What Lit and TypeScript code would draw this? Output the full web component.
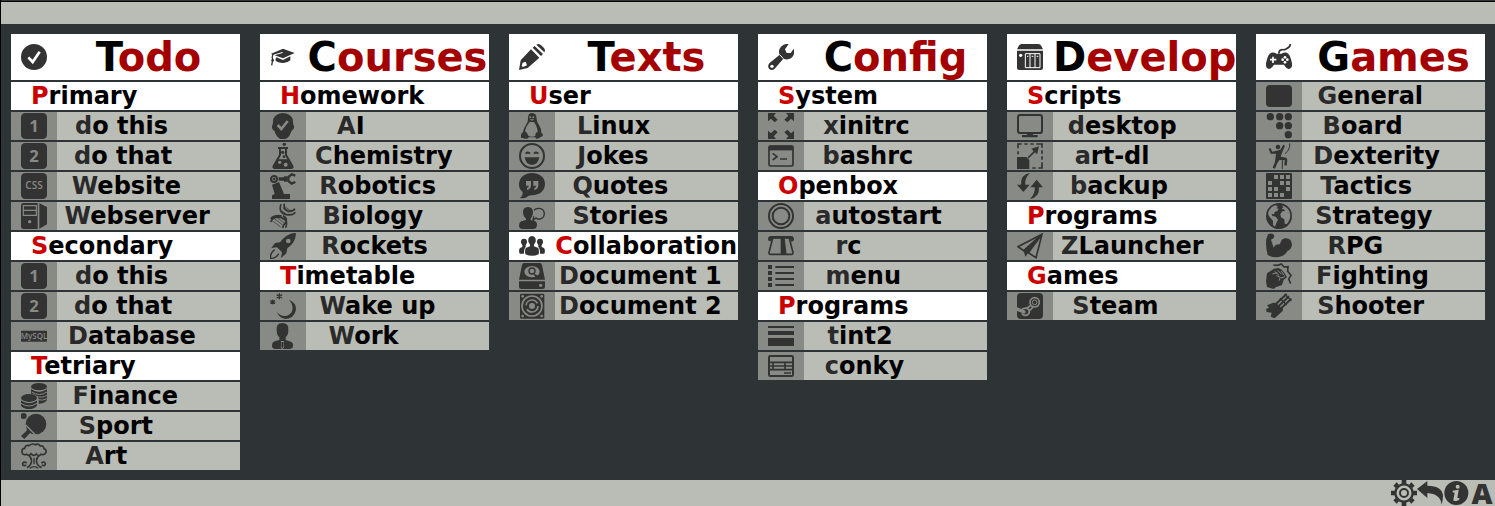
import { LitElement, html, svg, css, SVGTemplateResult } from "lit";
import { customElement, property } from "lit/decorators.js";

// Every glyph lives on a 78 x 78 grid. Class names: f = fill, s = stroke,
// c = cut-out fill in the cell colour, l = cut-out line in the cell colour.
const tile = (label: string, size: number, y: number) => svg`
  <rect class="f" width="78" height="78" rx="13" />
  <text class="c" x="39" y=${y} font-size=${size} text-anchor="middle">${label}</text>`;

const ICONS: Record<string, SVGTemplateResult> = {
  check: svg`<circle class="f" cx="39" cy="39" r="39" /><path class="l" stroke-width="8" d="M22 40L35 54L56 23" />`,
  one: tile("1", 50, 58),
  two: tile("2", 50, 58),
  css: svg`<rect class="f" width="78" height="78" rx="13" /><text class="c thin" x="39" y="49" font-size="30" text-anchor="middle">CSS</text>`,
  mysql: svg`<rect class="f" y="23" width="78" height="33" rx="2" /><text class="c thin" x="39" y="47" font-size="24" text-anchor="middle">MySQL</text>`,
  server: svg`
    <path class="f" d="M6 0H50V78H6Q0 78 0 70V8Q0 0 6 0Z" />
    <path class="f" d="M55 1L78 12V64L55 77Z" />
    <path class="l" stroke-width="3.5" d="M7 8H46V37H7ZM7 22H46" />
    <circle class="c" cx="26" cy="56" r="5" />`,
  coins: svg`
    <ellipse class="f" cx="54" cy="11" rx="24" ry="11" />
    <path class="f" d="M30 16Q54 34 78 16V51Q72 62 53 62V46Q46 34 30 32Z" />
    <path class="l" stroke-width="3" d="M30 17Q54 33 78 17M32 27Q56 42 78 27M44 39Q62 47 78 37M50 50Q66 54 78 47" />
    <ellipse class="f" cx="24" cy="45" rx="24" ry="12" />
    <path class="f" d="M0 50Q24 68 48 50V68Q40 78 24 78Q8 78 0 68Z" />
    <path class="l" stroke-width="3" d="M0 51Q24 67 48 51M0 61Q24 77 48 61" />`,
  paddle: svg`
    <circle class="f" cx="8" cy="9" r="9" />
    <circle class="f" cx="45" cy="33" r="31" />
    <path class="f" d="M18 43L45 64L32 62L27 60L10 78L0 69L17 53Z" />
    <path class="l" stroke-width="4" d="M14 36L46 68" />`,
  tree: svg`
    <path class="s" stroke-width="5" d="M30 32Q24 40 17 34Q2 38 3 24Q3 16 11 16Q13 5 25 8Q32 0 43 5Q52 1 58 9Q68 7 69 17Q77 19 75 28Q70 38 60 34Q54 42 46 33Q38 42 30 32ZM24 38Q34 47 31 58Q29 68 18 74M54 38Q44 47 47 58Q49 68 62 74M17 60Q7 54 5 62Q5 71 16 66M61 60Q71 54 73 62Q73 71 62 66" />
    <path class="s" stroke-width="4" d="M39 44V64M26 76Q39 66 52 76" />`,
  cap: svg`
    <path class="f" d="M39 14L74 27L39 43L14 34L38 27L37 24L8 33L3 29Z" />
    <path class="f" d="M19 40L39 48L61 37V49Q53 57 40 57Q23 57 16 49Z" />
    <path class="s" stroke-width="4" d="M9 30Q5 38 8 48L5 64" /><circle class="f" cx="8" cy="49" r="4" />`,
  head: svg`
    <path class="f" d="M39 0Q61 2 68 17L70 35Q74 39 71 47Q68 52 65 53Q60 70 48 77Q39 80 30 77Q18 70 13 53Q7 51 6 44Q5 37 8 35L10 17Q17 2 39 0Z" />
    <path class="l" stroke-width="8" d="M23 36L34 48L53 24" />`,
  flask: svg`
    <circle class="f" cx="43" cy="4" r="5" />
    <path class="s" stroke-width="6" d="M24 15H54M30 17V36L11 69Q8 75 15 75H63Q70 75 67 69L48 36V17" />
    <path class="f" d="M24 49H54L68 76H9Z" />
    <circle class="f" cx="38" cy="28" r="5" /><circle class="f" cx="42" cy="41" r="4" />
    <circle class="c" cx="29" cy="58" r="5" /><circle class="c" cx="47" cy="65" r="6" />`,
  robot: svg`
    <circle class="s" cx="12" cy="18" r="9" stroke-width="6" /><circle class="f" cx="12" cy="18" r="4" />
    <path class="f" d="M26 13H42V10H52V26H42V23H26ZM6 35L27 27L42 63H60V78H6V67L14 63Z" />
    <path class="s" stroke-width="7" d="M76 8L65 4L55 12V24L65 32L76 27" />`,
  dna: svg`
    <path class="s" stroke-width="5" d="M33 4Q24 30 50 35Q68 38 76 28M43 2Q39 20 55 24Q69 26 75 17M2 57Q8 41 29 43Q57 46 47 74M2 47Q15 35 35 39M39 38Q58 48 41 66L38 75" />
    <path class="s" stroke-width="2" d="M43 9L66 27M38 15L58 31M36 23L47 32M10 45L38 66M19 43L42 60M30 42L44 53M5 52L32 72" />`,
  rocket: svg`
    <path class="f" d="M78 0Q56 0 39 17L30 28L15 30L4 45L21 43L36 58L33 75L49 61L52 46Q77 29 78 0Z" />
    <circle class="c" cx="55" cy="24" r="7" />
    <path class="s" stroke-width="4" d="M14 50Q0 60 2 76Q18 77 26 62" />`,
  moon: svg`
    <path class="f" d="M57 20Q82 31 77 54Q70 77 47 78Q28 76 21 57Q34 73 51 68Q71 60 67 39Q64 27 57 20Z" />
    <path class="s" stroke-width="4" d="M28 1V19M20 5L36 15M36 5L20 15M8 20V34M1 23L15 31M15 23L1 31" />`,
  person: svg`
    <path class="f" d="M37 0Q57 0 55 22Q55 37 47 43V51L63 56Q70 59 69 70Q68 78 58 78H15Q6 77 6 68Q6 58 14 55L28 51V43Q20 37 20 22Q18 0 37 0Z" />
    <path class="c" d="M32 54H42L40 60L42 74L37 78L32 74L34 60Z" /><path class="f" d="M35 57H39L40 73L37 75L34 73Z" />`,
  pencil: svg`
    <path class="f" d="M36 16L61 41L26 72L0 78L5 49ZM41 11L47 6L72 30L66 36ZM52 2Q60 -3 68 5L75 12Q80 19 76 25Z" />
    <path class="c" d="M11 56L20 53L24 64L12 69L8 66Z" />`,
  tux: svg`
    <path class="f" d="M39 0Q53 0 53 18Q53 27 61 38Q68 49 66 58Q74 65 71 69L56 77Q51 79 49 73H29Q25 79 20 77L6 74Q5 65 8 61L12 57Q13 46 21 36Q27 27 27 18Q26 0 39 0Z" />
    <path class="c" d="M32 27H45Q56 43 56 58Q49 56 49 69Q38 74 28 68Q24 58 18 55Q20 41 32 27Z" />
    <circle class="c" cx="34" cy="13" r="3" /><circle class="c" cx="43" cy="13" r="3" /><path class="c" d="M32 19H46L39 23Z" />`,
  smile: svg`
    <circle class="s" cx="39" cy="39" r="36" stroke-width="6" />
    <path class="s" stroke-width="6" d="M20 32Q27 25 33 32M45 32Q52 25 58 32" />
    <path class="f" d="M17 43H61Q58 65 39 66Q20 65 17 43Z" />`,
  quote: svg`
    <path class="f" d="M39 0Q77 2 78 34Q75 65 39 67Q27 67 24 72Q18 77 2 75Q12 69 11 57Q0 50 0 34Q2 2 39 0Z" />
    <path class="c" d="M21 24H36V38Q34 49 24 51V45Q30 43 29 38H21ZM43 24H58V38Q56 49 46 51V45Q52 43 51 38H43Z" />`,
  story: svg`
    <path class="f" d="M27 12Q43 12 42 31Q40 42 35 47V51L49 55Q56 59 53 71Q51 78 43 78H11Q0 77 0 68Q0 58 7 55L21 51V47Q13 42 12 30Q11 12 27 12Z" />
    <path class="s" stroke-width="4" d="M45 22Q51 14 64 17Q76 20 76 33Q75 44 66 47Q57 51 51 45L42 52L44 40" />`,
  group: svg`
    <path class="f" d="M39 9Q52 10 50 26L45 35V40L58 45Q61 55 59 64Q40 73 19 64Q17 53 20 45L33 40V35L28 26Q26 10 39 9Z" />
    <path class="f" d="M15 17Q25 17 24 29L20 37V42Q15 47 15 62H2Q-2 52 3 45L10 42V37L6 29Q5 17 15 17ZM63 17Q53 17 54 29L58 37V42Q63 47 63 62H76Q80 52 75 45L68 42V37L72 29Q73 17 63 17Z" />`,
  disk: svg`
    <path class="f" d="M15 0H63Q68 0 69 6L78 50H0L9 6Q10 0 15 0ZM0 55H78V72Q78 78 71 78H7Q0 78 0 72Z" />
    <ellipse class="c" cx="39" cy="26" rx="23" ry="17" />
    <circle class="s" cx="39" cy="24" r="9" stroke-width="4" />
    <path class="f" d="M42 30L57 38L50 44Z" /><circle class="c" cx="65" cy="67" r="5" />`,
  speaker: svg`
    <rect class="f" x="3" y="2" width="73" height="75" rx="4" />
    <circle class="l" cx="39" cy="39" r="30" stroke-width="5" />
    <circle class="l" cx="39" cy="39" r="18" stroke-width="5" stroke-dasharray="45 12" />
    <circle class="c" cx="39" cy="39" r="9" />
    <circle class="c" cx="11" cy="10" r="4" /><circle class="c" cx="68" cy="10" r="4" />
    <circle class="c" cx="11" cy="69" r="4" /><circle class="c" cx="68" cy="69" r="4" />`,
  wrench: svg`
    <path class="f" d="M62 0L51 16L56 27L68 27L77 14Q82 34 69 43Q58 49 46 44L20 74Q12 81 4 75Q-3 67 4 58L35 32Q29 19 39 8Q48 -2 62 0Z" />
    <circle class="c" cx="12" cy="67" r="5" /><path class="l" stroke-width="3" d="M35 32L46 44" />`,
  expand: svg`
    <path class="f" d="M0 0H24L17 8L29 20L20 28L9 17L0 25ZM78 0H54L61 8L49 20L58 28L69 17L78 25ZM0 78H24L17 70L29 58L20 50L9 61L0 53ZM78 78H54L61 70L49 58L58 50L69 61L78 53Z" />`,
  terminal: svg`
    <rect class="s" x="3" y="9" width="72" height="60" rx="5" stroke-width="5" />
    <path class="f" d="M2 8H76V22H2Z" /><path class="s" stroke-width="5" d="M14 31L27 41L14 51M36 48H57" />`,
  rings: svg`<circle class="s" cx="39" cy="39" r="36" stroke-width="6" /><circle class="s" cx="39" cy="39" r="25" stroke-width="6" />`,
  apron: svg`
    <path class="s" stroke-width="5" d="M14 15H64L75 59Q76 64 70 64H8Q2 64 3 59Z" />
    <path class="f" d="M9 9H69Q78 9 78 21Q77 26 69 25L65 16H50L56 66H38V16H13L9 25Q0 26 0 18Q0 9 9 9Z" />`,
  list: svg`<path class="f" d="M0 6H12V18H0ZM0 24H12V36H0ZM0 42H12V54H0ZM0 60H12V72H0ZM22 9H78V15H22ZM22 27H78V33H22ZM22 45H78V51H22ZM22 63H78V69H22Z" />`,
  bars: svg`<path class="f" d="M0 9H78V15H0ZM0 24H78V36H0ZM0 45H78V69H0Z" />`,
  table: svg`
    <rect class="s" x="3" y="9" width="72" height="60" rx="4" stroke-width="6" />
    <path class="s" stroke-width="5" d="M3 28H75M3 39H75M3 50H75M15 28V50M51 28V50M48 60H69" />`,
  nas: svg`
    <path class="f" d="M14 0H64Q70 0 73 6L78 16H0L5 6Q8 0 14 0Z" />
    <path class="f" d="M0 20H78V72Q78 78 71 78H7Q0 78 0 72Z" />
    <circle class="c" cx="11" cy="34" r="5" /><path class="l" stroke-width="3" d="M25 29H69V71H25ZM39 29V71M54 29V71M30 37H34M44 37H49M59 37H64" />`,
  monitor: svg`<rect class="s" x="3" y="6" width="72" height="54" rx="7" stroke-width="6" /><path class="f" d="M30 60H48V66H62V73H15V66H30Z" />`,
  resize: svg`
    <path class="f" d="M0 42H28L37 51V78H0Z" />
    <path class="s" stroke-width="5" d="M3 34V25M3 16V3H14M22 3H32M40 3H50M58 3H75V14M75 22V32M75 40V50M75 58V75H64M56 75H46M33 45L56 22" />
    <path class="f" d="M43 17L66 10L60 34Z" />`,
  sync: svg`
    <path class="f" d="M39 0Q22 17 25 35H38L19 57L0 35H12Q10 5 39 0ZM39 78Q56 61 53 43H40L59 20L78 43H66Q68 73 39 78Z" />`,
  plane: svg`<path class="s" stroke-width="5" d="M75 4L3 41L20 53L75 4L57 74L34 59L75 4" /><path class="f" d="M20 53L75 3L34 59L25 71Z" />`,
  steam: svg`
    <rect class="f" width="78" height="78" rx="12" />
    <circle class="l" cx="53" cy="28" r="14" stroke-width="5" /><circle class="l" cx="53" cy="28" r="7" stroke-width="3" />
    <path class="l" stroke-width="5" d="M41 37L30 45M48 42L39 52M12 53Q19 43 29 46Q38 49 37 58Q33 68 23 67Q17 66 15 61" />
    <path class="c" d="M0 43L23 52Q30 58 22 62L0 54Z" />`,
  gamepad: svg`
    <path class="f" d="M16 26Q25 24 31 29H47Q53 24 62 26Q72 28 78 58Q80 73 69 75Q62 75 54 62H24Q16 75 9 75Q-2 73 0 58Q6 28 16 26Z" />
    <path class="l" stroke-width="5" d="M21 38V57M12 47H31" />
    <circle class="c" cx="57" cy="40" r="4" /><circle class="c" cx="57" cy="55" r="4" /><circle class="c" cx="50" cy="47" r="4" /><circle class="c" cx="64" cy="47" r="4" />
    <path class="s" stroke-width="5" d="M39 29Q38 18 48 17Q55 18 62 14Q72 11 73 0" />`,
  panel: svg`<rect class="f" y="6" width="78" height="66" rx="12" />`,
  dots: svg`
    <circle class="f" cx="13" cy="11" r="11" /><circle class="f" cx="41" cy="11" r="11" /><circle class="f" cx="67" cy="11" r="11" />
    <circle class="f" cx="41" cy="38" r="11" /><circle class="f" cx="67" cy="38" r="11" /><circle class="f" cx="67" cy="65" r="11" />`,
  climber: svg`
    <circle class="f" cx="36" cy="12" r="7" />
    <path class="f" d="M8 17L13 15L19 26L32 23L43 20L52 5L57 8L48 29L44 41L61 44L64 50L62 68L55 67L56 51L40 51L33 62L27 77L20 74L27 56L30 32L14 32Z" />
    <path class="s" stroke-width="3" d="M71 1Q73 20 57 32M49 50V78" />`,
  grid: svg`
    <rect class="f" width="78" height="78" rx="3" />
    <path class="c" d="M24 6H36V18H24ZM42 6H54V18H42ZM60 6H72V18H60ZM6 24H18V36H6ZM42 24H54V36H42ZM60 24H72V36H60ZM6 42H18V54H6ZM24 42H36V54H24ZM60 42H72V54H60ZM6 60H18V72H6ZM24 60H36V72H24ZM42 60H54V72H42Z" />`,
  globe: svg`
    <circle class="f" cx="39" cy="39" r="39" />
    <path class="c" d="M7 27Q13 12 27 7L36 10L31 16L38 17L34 24L26 27L24 34L16 33L19 39L29 41L36 50L31 60L27 71L21 66V53L13 44L7 36ZM48 7Q63 12 70 24L73 37Q72 55 62 63L56 62L55 49L45 43L43 33L49 25L58 24L53 19L47 18L52 13Z" />`,
  arm: svg`
    <path class="f" d="M6 4Q18 -2 23 5Q28 11 20 17L15 20L23 44Q28 31 42 34Q46 14 60 16Q76 16 78 35Q76 49 65 53Q57 69 38 72Q18 74 5 66Q-2 42 1 18Z" />`,
  fist: svg`
    <path class="f" d="M3 31L24 17L38 15L48 21L57 32L63 43L53 50L48 66L29 73L23 78L3 72L0 54Z" />
    <path class="l" stroke-width="3" d="M26 25L39 37M35 22L47 34M45 24L55 37M19 33L34 29M31 38L43 43L39 53M45 45L57 41" />
    <path class="s" stroke-width="5" d="M22 6L35 7L46 3L54 12L66 11L65 25L75 37L68 48L74 62" />`,
  gun: svg`
    <path class="f" d="M3 37L22 29L31 30L45 44L51 46L50 54L26 76L14 71L17 59L2 57L0 48L9 44Z" />
    <path class="s" stroke-width="6" d="M29 34L62 3M36 41L69 10M43 48L76 17" />
    <path class="s" stroke-width="4" d="M42 16L62 36M56 3L76 23" />`,
  gear: svg`
    <path class="s" stroke-width="14" d="M39 0V12M39 66V78M0 39H12M66 39H78M12 12L19 19M59 59L66 66M12 66L19 59M59 19L66 12" />
    <circle class="s" cx="39" cy="39" r="26" stroke-width="7" /><circle class="s" cx="39" cy="39" r="12" stroke-width="6" />`,
  reply: svg`<path class="f" d="M0 27L31 3V17Q77 17 78 49Q78 60 74 74Q71 42 31 39V54Z" />`,
  info: svg`
    <circle class="f" cx="40" cy="39" r="36" />
    <circle class="c" cx="44" cy="20" r="6" /><path class="c" d="M29 32L47 29L43 54L50 55L48 60Q39 65 32 62Q30 60 32 54L35 38L29 37Z" />`,
};

interface Row {
  label: string;
  icon?: string;
  head?: boolean;
}
interface Column {
  title: string;
  icon: string;
  rows: Row[];
}

const head = (label: string, icon?: string): Row => ({ label, icon, head: true });
const item = (label: string, icon: string): Row => ({ label, icon });

const COLUMNS: Column[] = [
  {
    title: "Todo", icon: "check", rows: [
      head("Primary"), item("do this", "one"), item("do that", "two"), item("Website", "css"), item("Webserver", "server"),
      head("Secondary"), item("do this", "one"), item("do that", "two"), item("Database", "mysql"),
      head("Tetriary"), item("Finance", "coins"), item("Sport", "paddle"), item("Art", "tree"),
    ],
  },
  {
    title: "Courses", icon: "cap", rows: [
      head("Homework"), item("AI", "head"), item("Chemistry", "flask"), item("Robotics", "robot"), item("Biology", "dna"), item("Rockets", "rocket"),
      head("Timetable"), item("Wake up", "moon"), item("Work", "person"),
    ],
  },
  {
    title: "Texts", icon: "pencil", rows: [
      head("User"), item("Linux", "tux"), item("Jokes", "smile"), item("Quotes", "quote"), item("Stories", "story"),
      head("Collaboration", "group"), item("Document 1", "disk"), item("Document 2", "speaker"),
    ],
  },
  {
    title: "Config", icon: "wrench", rows: [
      head("System"), item("xinitrc", "expand"), item("bashrc", "terminal"),
      head("Openbox"), item("autostart", "rings"), item("rc", "apron"), item("menu", "list"),
      head("Programs"), item("tint2", "bars"), item("conky", "table"),
    ],
  },
  {
    title: "Develop", icon: "nas", rows: [
      head("Scripts"), item("desktop", "monitor"), item("art-dl", "resize"), item("backup", "sync"),
      head("Programs"), item("ZLauncher", "plane"),
      head("Games"), item("Steam", "steam"),
    ],
  },
  {
    title: "Games", icon: "gamepad", rows: [
      item("General", "panel"), item("Board", "dots"), item("Dexterity", "climber"), item("Tactics", "grid"),
      item("Strategy", "globe"), item("RPG", "arm"), item("Fighting", "fist"), item("Shooter", "gun"),
    ],
  },
];

@customElement("menu-icon")
export class MenuIcon extends LitElement {
  static styles = css`
    :host { display: block; width: 26px; height: 26px; flex: none; }
    svg { display: block; width: 100%; height: 100%; }
    .f { fill: #333333; }
    .s { fill: none; stroke: #333333; }
    .c { fill: var(--cell, #babdb6); }
    .l { fill: none; stroke: var(--cell, #babdb6); }
    text { font-family: "Open Sans", sans-serif; font-weight: 700; }
    .thin { font-weight: 600; }
  `;
  @property() name = "";
  render() {
    return html`<svg viewBox="0 0 78 78" aria-hidden="true">${ICONS[this.name]}</svg>`;
  }
}

@customElement("menu-column")
export class MenuColumn extends LitElement {
  static styles = css`
    :host {
      display: flex;
      flex-direction: column;
      gap: 2px;
      min-width: 0;
      font: bold 24px/28px "DejaVu Sans", sans-serif;
      color: #000000;
      white-space: nowrap;
    }
    h2, h3 { margin: 0; font: inherit; }
    .title, .head, .item { display: flex; align-items: stretch; background: #ffffff; }
    .title { height: 46px; font-size: 40px; line-height: 46px; --cell: #ffffff; color: #a40000; }
    .head { height: 28px; --cell: #ffffff; }
    .item {
      height: 28px;
      width: 100%;
      padding: 0;
      border: 0;
      font: inherit;
      color: inherit;
      background: #babdb6;
      cursor: pointer;
      --cell: #888a85;
    }
    .cell { display: flex; flex: none; align-items: center; justify-content: center; width: 46px; background: var(--cell); }
    .label { display: flex; flex: 1; min-width: 0; }
    .label::before { content: ""; flex: 1 1 0; }
    .label::after { content: ""; flex: 4 1 0; }
    .title .label::after { flex-grow: 1; }
    .plain { padding-left: 20px; }
    .title .first { color: #000000; }
    .head .first { color: #cc0000; }
    .item .first { color: #2a2a2a; }
  `;
  @property({ attribute: false }) column!: Column;

  private text(label: string) {
    return html`<span><span class="first">${label[0]}</span>${label.slice(1)}</span>`;
  }
  private withIcon(label: string, icon: string) {
    return html`<span class="cell"><menu-icon name=${icon}></menu-icon></span><span class="label">${this.text(label)}</span>`;
  }
  private row(row: Row) {
    if (!row.head) return html`<button class="item" type="button">${this.withIcon(row.label, row.icon!)}</button>`;
    return html`<h3 class="head">
      ${row.icon ? this.withIcon(row.label, row.icon) : html`<span class="plain">${this.text(row.label)}</span>`}
    </h3>`;
  }
  render() {
    return html`<h2 class="title">${this.withIcon(this.column.title, this.column.icon)}</h2>
      ${this.column.rows.map((r) => this.row(r))}`;
  }
}

@customElement("app-root")
export class AppRoot extends LitElement {
  static styles = css`
    :host {
      display: flex;
      flex-direction: column;
      box-sizing: border-box;
      min-height: 100vh;
      background: #2e3436;
      border-left: 1px solid #000000;
    }
    .top { height: 22px; background: #babdb6; border-top: 1px solid #000000; margin-top: 1px; }
    main {
      flex: 1;
      display: grid;
      grid-template-columns: repeat(6, minmax(0, 1fr));
      align-items: start;
      gap: 20px;
      padding: 10px;
    }
    .bottom { display: flex; justify-content: flex-end; background: #babdb6; }
    .tool { display: block; width: 26px; height: 26px; padding: 0; border: 0; background: none; cursor: pointer; }
    .letter { font: 800 29px/26px "Open Sans", sans-serif; color: #333333; }
  `;
  private tools = [
    { icon: "gear", label: "Settings" },
    { icon: "reply", label: "Back" },
    { icon: "info", label: "About" },
  ];
  render() {
    return html`
      <header class="top"></header>
      <main>${COLUMNS.map((c) => html`<menu-column .column=${c}></menu-column>`)}</main>
      <footer class="bottom">
        ${this.tools.map((t) => html`<button class="tool" type="button" aria-label=${t.label}><menu-icon name=${t.icon}></menu-icon></button>`)}
        <button class="tool letter" type="button">A</button>
      </footer>
    `;
  }
}
